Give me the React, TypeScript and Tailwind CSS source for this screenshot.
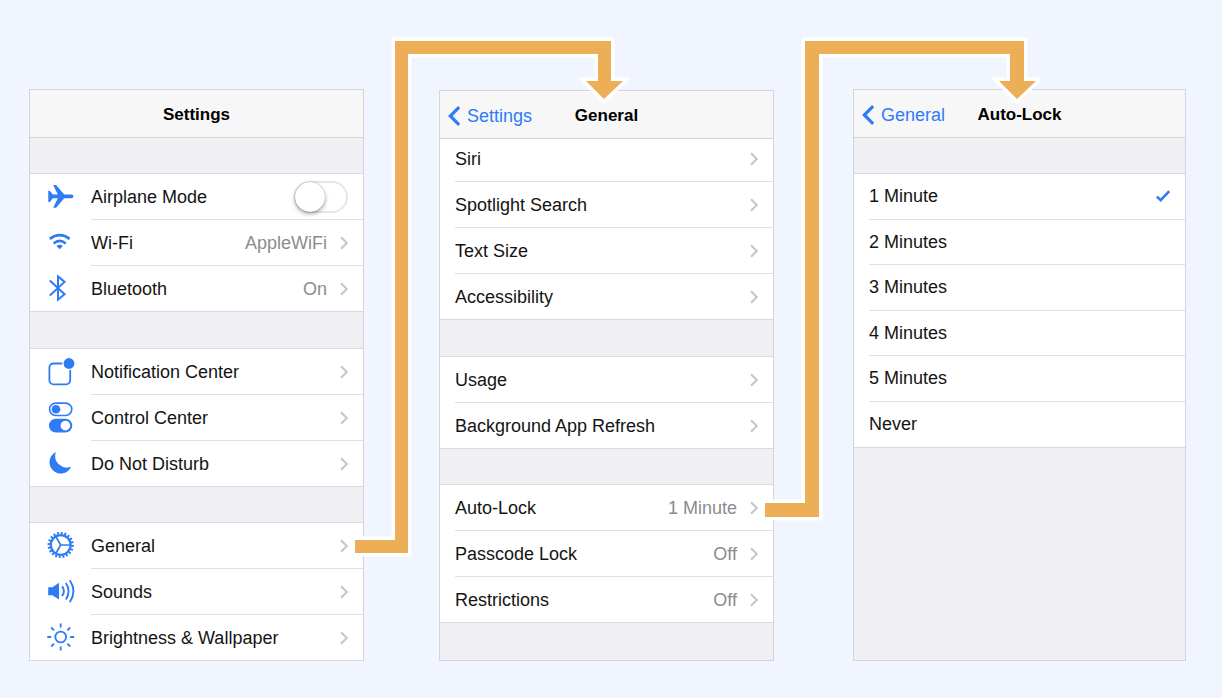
import React, { useState } from "react";

type IconProps = { children: React.ReactNode };

function Icon({ children }: IconProps) {
  return (
    <svg viewBox="0 0 28 28" className="h-7 w-7 shrink-0 overflow-visible text-[#2f7bf6]" fill="none" stroke="currentColor" aria-hidden="true">
      {children}
    </svg>
  );
}

const airplane = (
  <Icon>
    <path
      d="M1.3 7.6L3.2 8.2L5.8 11.5H10.8L6.2 2.1H9.1L17.2 11.5H24.2Q26.5 11.7 26.5 13.4Q26.5 15.1 24.2 15.3H17.2L9.1 24.8H6.2L10.8 15.3H5.8L3.2 18.7L1.3 19.2Z"
      fill="currentColor"
      stroke="none"
    />
  </Icon>
);

const wifi = (
  <Icon>
    <path d="M2.8 9.8Q12.7 2.6 22.6 9.8" strokeWidth="2.7" />
    <path d="M6.7 14.4Q12.7 9.4 18.7 14.4" strokeWidth="2.6" />
    <path d="M9.5 17.1Q12.7 14.4 15.9 17.1L12.7 20.3Z" fill="currentColor" stroke="none" />
  </Icon>
);

const bluetooth = (
  <Icon>
    <path d="M2.8 5.6L17.6 19.3L11 24.6V1.4L17.6 6.9L2.8 20.6" strokeWidth="2" />
  </Icon>
);

const notification = (
  <Icon>
    <rect x="2.4" y="5.5" width="20.8" height="20.8" rx="4" strokeWidth="1.8" />
    <circle cx="22" cy="5.5" r="6.8" fill="white" stroke="none" />
    <circle cx="22" cy="5.5" r="5.4" fill="currentColor" stroke="none" />
  </Icon>
);

const control = (
  <Icon>
    <rect x="2.6" y="-0.9" width="22.2" height="12.4" rx="6.2" strokeWidth="1.6" />
    <circle cx="9" cy="5.3" r="4.3" fill="currentColor" stroke="none" />
    <rect x="1.9" y="14.7" width="23.4" height="13.8" rx="6.9" fill="currentColor" stroke="none" />
    <circle cx="18.4" cy="21.6" r="4.8" fill="white" stroke="none" />
  </Icon>
);

const moon = (
  <Icon>
    <path d="M8.8 2.1A11.3 11.3 0 1 0 24.2 16.6A11.6 11.6 0 0 1 8.8 2.1Z" fill="currentColor" stroke="none" />
  </Icon>
);

const gear = (
  <Icon>
    <circle cx="13.7" cy="13" r="11.8" strokeWidth="2.6" pathLength="40" strokeDasharray="1.05 0.95" />
    <circle cx="13.7" cy="13" r="9.9" strokeWidth="2.2" />
    <path d="M13.7 13H23M13.7 13L9.1 5M13.7 13L9.1 21" strokeWidth="1.7" />
  </Icon>
);

const sounds = (
  <Icon>
    <path d="M1.2 9.2H5.4L12 4.8V21.6L5.4 17.2H1.2Z" fill="currentColor" stroke="none" />
    <path d="M15.2 8.4Q18.6 13.2 15.2 18" strokeWidth="1.9" />
    <path d="M18.9 5Q24.3 13.2 18.9 21.4" strokeWidth="1.9" />
    <path d="M22.8 2.2Q30.2 13.2 22.8 24.2" strokeWidth="1.9" />
  </Icon>
);

const brightness = (
  <Icon>
    <circle cx="13.7" cy="13" r="5.4" strokeWidth="1.8" />
    <path
      d="M13.7 -.4V3.6M13.7 22.4V26.4M.3 13H4.3M23.1 13H27.1M4.2 3.5L7 6.3M20.4 19.7L23.2 22.5M4.2 22.5L7 19.7M20.4 6.3L23.2 3.5"
      strokeWidth="1.8"
    />
  </Icon>
);

function Chevron() {
  return (
    <svg viewBox="0 0 8 14" className="h-[14px] w-2 shrink-0" fill="none" stroke="#c7c7cc" strokeWidth="2.2" aria-hidden="true">
      <path d="M1 1.2L6.8 7L1 12.8" />
    </svg>
  );
}

function Header({ title, back }: { title: string; back?: string }) {
  return (
    <header className="relative z-10 grid h-12 grid-cols-[1fr_auto_1fr] items-center border-b border-[#d3d3d6] bg-[#f7f7f7] pt-[3px]">
      <div className="flex items-center pl-2">
        {back && (
          <a href="#back" className="flex items-center gap-[7px] text-[18px] leading-6 text-[#2f7bf6]">
            <svg viewBox="0 0 12 20" className="h-5 w-3" fill="none" stroke="currentColor" strokeWidth="3.2" aria-hidden="true">
              <path d="M11.2 1.1L2.3 10L11.2 18.9" />
            </svg>
            {back}
          </a>
        )}
      </div>
      <h2 className="text-[17px] font-bold leading-6 text-black">{title}</h2>
    </header>
  );
}

function Panel({ children, className = "" }: { children: React.ReactNode; className?: string }) {
  return <section className={"flex-1 border border-[#d4d4d9] bg-[#efeff4] " + className}>{children}</section>;
}

type Item = { label: string; value?: string; icon?: React.ReactNode };

const rowInner = "flex h-full flex-1 items-center gap-[13px] border-b border-[#e0e0e3] pr-[15px] group-last:border-b-0";

function Row({ label, value, icon }: Item) {
  return (
    <li className="group h-[46px] last:border-b last:border-[#dadade]">
      <button type="button" className={"flex h-full w-full items-center text-left " + (icon ? "gap-4 pl-[17px]" : "pl-[15px]")}>
        {icon}
        <span className={rowInner}>
          <span className="flex-1">{label}</span>
          {value && <span className="text-[#8b8b8f]">{value}</span>}
          <Chevron />
        </span>
      </button>
    </li>
  );
}

function ToggleRow({ label, icon }: Item) {
  return (
    <li className="group h-[46px]">
      <label className="flex h-full items-center gap-4 pl-[17px]">
        {icon}
        <span className={rowInner}>
          <span className="flex-1">{label}</span>
          <input
            type="checkbox"
            role="switch"
            className="flex h-8 w-[54px] appearance-none items-center rounded-full border-2 border-[#e6e6e6] bg-white before:h-[30px] before:w-[30px] before:shrink-0 before:-ml-px before:rounded-full before:bg-white before:shadow-[0_2px_4px_rgba(0,0,0,0.35),0_0_1px_rgba(0,0,0,0.4)] before:content-[''] checked:justify-end checked:bg-[#4cd964]"
          />
        </span>
      </label>
    </li>
  );
}

function Group({ items, className = "", children }: { items: Item[]; className?: string; children?: React.ReactNode }) {
  return (
    <ul className={"bg-white " + className}>
      {children}
      {items.map((item) => (
        <Row key={item.label} {...item} />
      ))}
    </ul>
  );
}

function Gap({ className }: { className: string }) {
  return <div className={"border-b border-[#dadade] " + className} />;
}

function Arrow({ d, viewBox, className }: { d: string; viewBox: string; className: string }) {
  return (
    <svg viewBox={viewBox} className={"pointer-events-none absolute z-20 " + className} aria-hidden="true">
      <path d={d} fill="#ecae57" stroke="white" strokeWidth="7" paintOrder="stroke" />
    </svg>
  );
}

const durations = ["1 Minute", "2 Minutes", "3 Minutes", "4 Minutes", "5 Minutes", "Never"];

export default function App() {
  const [selected, setSelected] = useState("1 Minute");
  return (
    <main className="grid min-h-screen grid-cols-[335fr_75px_335fr_79px_333fr] content-start bg-[#f0f5ff] pb-9 pl-[29px] pr-9 pt-[89px] font-['Liberation_Sans',Arial,sans-serif] text-[18px] leading-6 text-[#141414]">
      <div className="col-start-1 flex flex-col">
        <Panel>
          <Header title="Settings" />
          <Gap className="h-9" />
          <Group
            items={[
              { label: "Wi-Fi", value: "AppleWiFi", icon: wifi },
              { label: "Bluetooth", value: "On", icon: bluetooth },
            ]}
          >
            <ToggleRow label="Airplane Mode" icon={airplane} />
          </Group>
          <Gap className="h-[37px]" />
          <Group
            items={[
              { label: "Notification Center", icon: notification },
              { label: "Control Center", icon: control },
              { label: "Do Not Disturb", icon: moon },
            ]}
          />
          <Gap className="h-9" />
          <Group
            className="-mb-px"
            items={[
              { label: "General", icon: gear },
              { label: "Sounds", icon: sounds },
              { label: "Brightness & Wallpaper", icon: brightness },
            ]}
          />
        </Panel>
      </div>

      <div className="relative col-start-3 flex flex-col">
        <Panel className="mt-px">
          <Header title="General" back="Settings" />
          <Group
            className="-mt-[3px]"
            items={[{ label: "Siri" }, { label: "Spotlight Search" }, { label: "Text Size" }, { label: "Accessibility" }]}
          />
          <Gap className="h-[37px]" />
          <Group items={[{ label: "Usage" }, { label: "Background App Refresh" }]} />
          <Gap className="h-9" />
          <Group
            items={[
              { label: "Auto-Lock", value: "1 Minute" },
              { label: "Passcode Lock", value: "Off" },
              { label: "Restrictions", value: "Off" },
            ]}
          />
        </Panel>
        <Arrow
          viewBox="351 33 280 530"
          className="-left-[88px] -top-14 h-[530px] w-[280px]"
          d="M355 540H395V41H611V81H623L604 99L586 81H598V54H408V553H355Z"
        />
      </div>

      <div className="relative col-start-5 flex flex-col">
        <Panel>
          <Header title="Auto-Lock" back="General" />
          <Gap className="h-9" />
          <div role="radiogroup" aria-label="Auto-Lock" className="grid h-[274px] auto-rows-fr border-b border-[#dadade] bg-white">
            {durations.map((d) => (
              <label key={d} className="group flex items-center pl-[15px]">
                <span className={rowInner}>
                  <span className="flex-1">{d}</span>
                  <input type="radio" name="auto-lock" value={d} checked={selected === d} onChange={() => setSelected(d)} className="peer sr-only" />
                  <svg viewBox="0 0 14 12" className="invisible h-3 w-[14px] peer-checked:visible" fill="none" stroke="#2f7bf6" strokeWidth="2.5" aria-hidden="true">
                    <path d="M.9 6.6L4.7 10.2L13.2 1.2" />
                  </svg>
                </span>
              </label>
            ))}
          </div>
        </Panel>
        <Arrow
          viewBox="761 33 280 490"
          className="-left-[92px] -top-14 h-[490px] w-[280px]"
          d="M765 503H805V41H1024V81H1036L1017 99L999 81H1010V54H819V517H765Z"
        />
      </div>
    </main>
  );
}
